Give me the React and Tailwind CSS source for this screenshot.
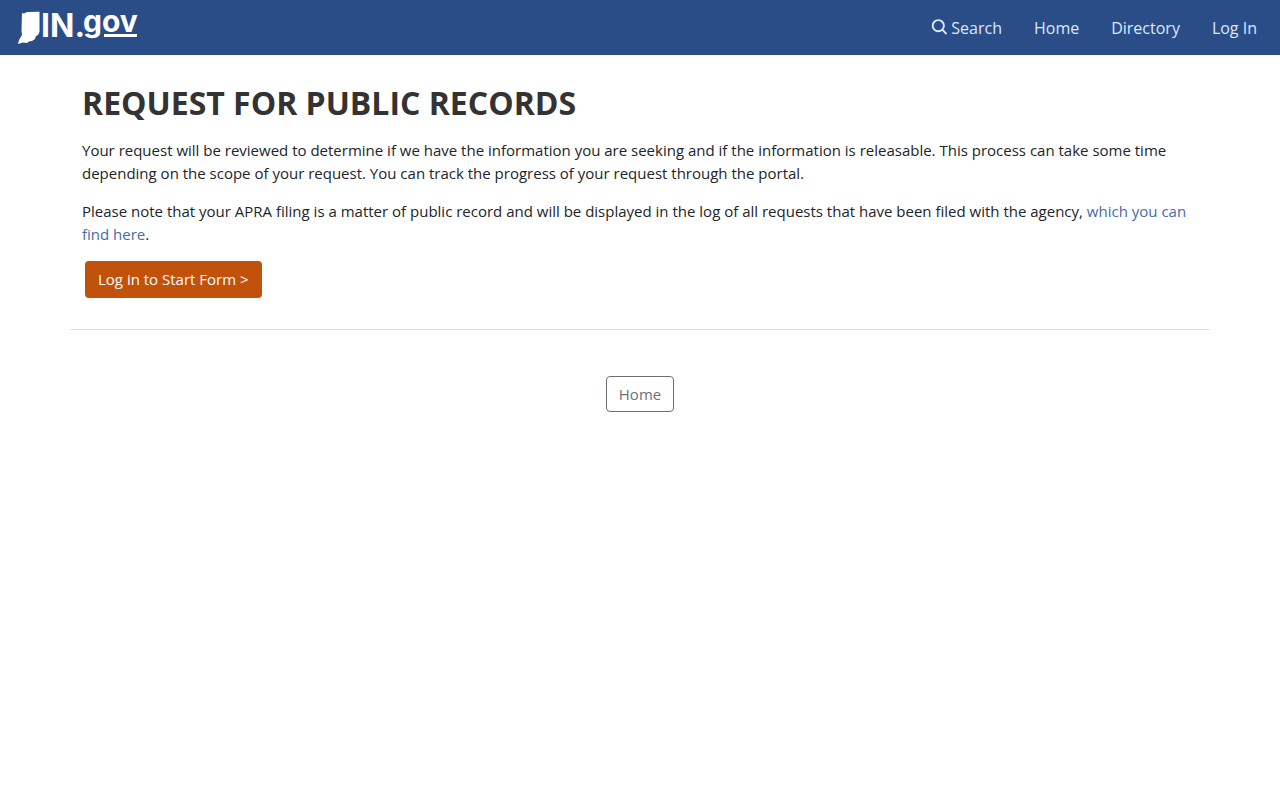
import React from 'react';

const navLinks = [
  { label: 'Home', href: '#home' },
  { label: 'Directory', href: '#directory' },
  { label: 'Log In', href: '#login' },
];

const SearchIcon = () => (
  <svg className="w-4 h-4 mb-[2px]" viewBox="0 0 16 16" fill="none" stroke="currentColor" strokeWidth="1.9" aria-hidden="true">
    <circle cx="7.300" cy="6.700" r="5.600" />
    <path d="M11.300 10.700 15.500 15" />
  </svg>
);

const Logo = () => (
  <svg className="w-[124px] h-[55px]" viewBox="0 0 124 55" fill="#fff" role="img">
    <path d="M4 13 6 13.500 9 12 21.500 11.700V32L20 35 18 36 17 39 14 41 11 41.500 9 43 5 42.500 0 44 1 40 4 35 3.500 31Z" />
    <text x="23" y="37" className="font-['Inter',sans-serif] font-bold text-[32px]">IN.</text>
    <text x="65" y="32" className="font-['Inter',sans-serif] font-bold text-[30px]">gov</text>
    <rect x="86" y="34" width="33" height="3" />
  </svg>
);

const App = () => {
  return (
    <div className="min-h-screen bg-white font-['Open_Sans',sans-serif] text-[15px] leading-[23px] text-[#212529]">
      <header className="bg-[#2a4d87] h-[55px] flex justify-between items-center px-[18px]">
        <a href="#top" aria-label="IN.gov">
          <Logo />
        </a>
        <nav className="flex items-center gap-8 pr-[5px] text-base text-[#dce8ff]">
          <a href="#search" className="flex items-center gap-1">
            <SearchIcon />
            Search
          </a>
          {navLinks.map((link) => (
            <a key={link.label} href={link.href}>{link.label}</a>
          ))}
        </nav>
      </header>

      <main className="max-w-[1140px] mx-auto">
        <section className="px-3 pt-7 pb-[31px] border-b border-[#dddddd]">
          <h1 className="text-[32px] leading-10 font-bold text-[#333333]">REQUEST FOR PUBLIC RECORDS</h1>
          <p className="mt-4">
            Your request will be reviewed to determine if we have the information you are seeking and if the
            information is releasable. This process can take some time depending on the scope of your request. You
            can track the progress of your request through the portal.
          </p>
          <p className="mt-[15px]">
            Please note that your APRA filing is a matter of public record and will be displayed in the log of all
            requests that have been filed with the agency,{' '}
            <a href="#log" className="text-[#466ba8]">which you can find here</a>.
          </p>
          <button type="button" className="mt-[15px] ml-[3px] block rounded-[4px] bg-[#c2510c] px-[13px] py-[7px] text-white">
            Log in to Start Form &gt;
          </button>
        </section>

        <div className="mt-[46px] flex justify-center">
          <a href="#home" className="rounded-[4px] border border-[#6c707b] px-3 py-[6px] leading-[22px] text-[#6c707b]">
            Home
          </a>
        </div>
      </main>
    </div>
  );
};

export default App;
